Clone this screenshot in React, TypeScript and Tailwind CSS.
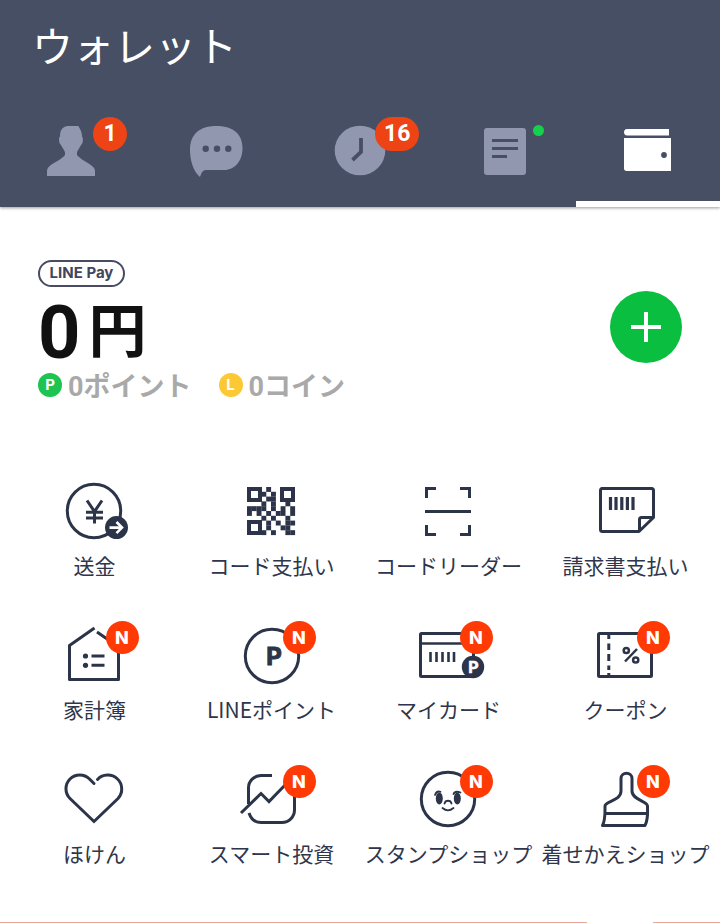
import React from 'react'
import clsx from 'clsx'

const NAVY = '#2b3448'
const TAB = '#9297b0'
const HEADER = '#474f65'

/* header tab icons */
function PersonIcon() {
  return (
    <svg viewBox="0 0 64 64" className="size-16" fill={TAB} aria-hidden="true">
      <path d="M27 7H38.300L39.500 9C41 11.500 42 14 42 17.500C43.200 18.500 43 21 42.500 24C40.500 26.500 39 29.500 37 33V36C40 40 47 43 51.700 46.700C54 48.500 55 50 55 52V57H7V52C7 50 8 48.500 10 46.700C15 43 22 40 25 36V33C23 29.500 21.500 26.500 19.500 24C18.700 20 19 18 20 17.500C20 11 22.500 8 27 7Z" />
    </svg>
  )
}

function ChatIcon() {
  return (
    <svg viewBox="0 0 64 64" className="size-16" fill={TAB} aria-hidden="true">
      <path d="M32 7C48 7 58.500 14 58.500 29C58.500 44 49 51 40 51H22C18.500 51 17.500 54 16 58C9 52 6 41 6 31C6 15 16 7 32 7Z" />
      <g fill={HEADER}>
        <circle cx="21.700" cy="29.700" r="3.200" />
        <circle cx="33" cy="29.700" r="3.200" />
        <circle cx="44.300" cy="29.700" r="3.200" />
      </g>
    </svg>
  )
}

function ClockIcon() {
  return (
    <svg viewBox="0 0 64 64" className="size-16" aria-hidden="true">
      <ellipse cx="32" cy="31.500" rx="25.300" ry="24.800" fill={TAB} />
      <path d="M33 19V33L24.500 41" fill="none" stroke={HEADER} strokeWidth="3.800" />
    </svg>
  )
}

function NewsIcon() {
  return (
    <svg viewBox="0 0 64 64" className="size-16" aria-hidden="true">
      <rect x="12" y="9" width="42" height="47" rx="3" fill={TAB} />
      <path d="M20 21.500H46M20 29.500H46M20 37.500H35" stroke={HEADER} strokeWidth="3" />
    </svg>
  )
}

function WalletIcon() {
  return (
    <svg viewBox="0 0 64 64" className="size-16" fill="#fff" aria-hidden="true">
      <path d="M11 10H53V16.500H11C7 16.500 7 10 11 10Z" />
      <path d="M8 19H55V52H10.500C9 52 8 51 8 49.500Z" />
      <circle cx="48" cy="36" r="2.900" fill={HEADER} />
    </svg>
  )
}

/* service icons, all on the same 80 x 72 canvas */
function Glyph({ children }: { children: React.ReactNode }) {
  return (
    <svg viewBox="1 0 80 72" className="h-[72px] w-20" fill="none" stroke={NAVY} strokeWidth="3" aria-hidden="true">
      {children}
    </svg>
  )
}

function SendIcon() {
  return (
    <Glyph>
      <circle cx="40" cy="36" r="26.700" />
      <path d="M33 25.500L40.500 36.500L48 25.500M40.500 36.500V48.500M32 37.300H49M32 43H49" strokeWidth="3" />
      <circle cx="62.500" cy="52.600" r="11.500" fill={NAVY} stroke="none" />
      <path d="M55.500 52.600H67.500M62.500 47L68 52.600L62.500 58.200" stroke="#fff" strokeWidth="2.600" />
    </Glyph>
  )
}

const QR = [
  '....#.....',
  '...#.#....',
  '....##....',
  '...#.#..#.',
  '####.#.#.#',
  '#.#.#.##.#',
  '...#.#..#.',
  '....#.#.##',
  '....#..##.',
  '...#.#..##',
]

function QrIcon() {
  return (
    <Glyph>
      <g fill={NAVY} stroke="none">
        {QR.map((row, y) =>
          row.split('').map((c, x) =>
            c === '#' ? <rect key={`${x}-${y}`} x={16 + x * 4.8} y={12 + y * 4.8} width="4.900" height="4.900" /> : null
          )
        )}
      </g>
      <g strokeWidth="4">
        <rect x="18" y="14" width="11" height="11" />
        <rect x="51" y="14" width="11" height="11" />
        <rect x="18" y="47" width="11" height="11" />
      </g>
    </Glyph>
  )
}

function ReaderIcon() {
  return (
    <Glyph>
      <path d="M28 13.500H18.500V23M52 13.500H61.500V23M18.500 50V59.500H28M61.500 50V59.500H52M17 36.500H63" />
    </Glyph>
  )
}

function BillIcon() {
  return (
    <Glyph>
      <path d="M16.500 13.500H66.500Q68.500 13.500 68.500 15.500V42.500L54 56.500H17.500Q15.500 56.500 15.500 54.500V15.500Q15.500 13.500 17.500 13.500Z" strokeLinejoin="round" />
      <path d="M54.500 56V44.500Q54.500 42.500 56.500 42.500H68" />
      <path d="M25.500 22V35M31 22V35M36.800 22V35M42.400 22V35M48 22V35" strokeWidth="3.200" />
    </Glyph>
  )
}

function HouseIcon() {
  return (
    <Glyph>
      <path d="M40.500 9L15.500 26.500V60.500H64.500V30M43 13L64 27.500" strokeLinejoin="round" />
      <path d="M37.500 37H50.500M37.500 46.300H50.500" />
      <g fill={NAVY} stroke="none">
        <circle cx="31.500" cy="37" r="2.600" />
        <circle cx="31.500" cy="46.300" r="2.600" />
      </g>
    </Glyph>
  )
}

function PointIcon() {
  return (
    <Glyph>
      <circle cx="41" cy="37" r="26.700" />
      <text x="43" y="46" textAnchor="middle" fill={NAVY} strokeWidth="1" className="font-['Inter',sans-serif] text-2xl font-bold">
        P
      </text>
    </Glyph>
  )
}

function CardIcon() {
  return (
    <Glyph>
      <rect x="12.500" y="14.500" width="53" height="43" rx="1" />
      <path d="M12.500 24.500H65" strokeWidth="2.600" />
      <path d="M22.500 33V43M28.500 33V43M34.500 33V43M40.500 33V43M46 33V43" strokeWidth="2.600" />
      <circle cx="65" cy="48" r="11.200" fill={NAVY} stroke="none" />
      <text x="65.500" y="54" textAnchor="middle" fill="#fff" stroke="#fff" strokeWidth="0.600" className="font-['Inter',sans-serif] text-base font-bold">
        P
      </text>
    </Glyph>
  )
}

function CouponIcon() {
  return (
    <Glyph>
      <rect x="13.500" y="14.500" width="53" height="43" rx="1" />
      <path d="M23.800 14V20M23.800 24.500V31M23.800 35V42M23.800 46.500V51M23.800 54V58" />
      <g strokeWidth="2.500">
        <circle cx="41.300" cy="31.500" r="2.600" />
        <circle cx="50.700" cy="41" r="2.600" />
        <path d="M52 30L40 42.500" />
      </g>
    </Glyph>
  )
}

function HeartIcon() {
  return (
    <Glyph>
      <path d="M40 20.500L35.500 16A13.700 13.700 0 0 0 16 35.500L40 58.500L64 35.500A13.700 13.700 0 0 0 43.500 16.500" strokeLinecap="round" />
    </Glyph>
  )
}

function InvestIcon() {
  return (
    <Glyph>
      <path d="M41 12.500H30A12.500 12.500 0 0 0 17.500 25V41M18 50C20 56 24 59.500 30 59.500H51A12.500 12.500 0 0 0 63.500 47V32" />
      <path d="M10 50L30 30.500L38 38.500L56 20" />
    </Glyph>
  )
}

function StampIcon() {
  return (
    <Glyph>
      <circle cx="40" cy="36" r="26.700" />
      <g fill={NAVY} stroke="none">
        <ellipse cx="31.300" cy="35.500" rx="3.500" ry="6" />
        <ellipse cx="49.300" cy="35.500" rx="3.500" ry="6" />
      </g>
      <g strokeWidth="1.800" strokeLinecap="round">
        <path d="M27 32Q28.500 27.500 32.500 28.800M45.500 31Q47 27.500 52.500 29.500" />
        <path d="M36.500 40.500A3.600 3.600 0 0 1 43.500 40.500M34.500 45Q40 49.800 45.500 45" />
      </g>
    </Glyph>
  )
}

function BrushIcon() {
  return (
    <Glyph>
      <path d="M36 15.500C36 8.500 47 8.500 47 15.500V28C47 37 62.500 38 62.500 43C62.500 50 63.500 56 60 62.500H17.500C20.500 57 20 50 20 43C20 38 36 38 36 28Z" strokeLinejoin="round" />
      <path d="M20 50.500H62.500" />
    </Glyph>
  )
}

const tabs = [
  { name: '友だち', icon: <PersonIcon />, badge: '1', badgePos: 'left-[53px]' },
  { name: 'トーク', icon: <ChatIcon /> },
  { name: 'タイムライン', icon: <ClockIcon />, badge: '16', badgePos: 'left-[47px]' },
  { name: 'ニュース', icon: <NewsIcon />, dot: true },
  { name: 'ウォレット', icon: <WalletIcon />, active: true },
]

const services = [
  { label: '送金', icon: <SendIcon /> },
  { label: 'コード支払い', icon: <QrIcon /> },
  { label: 'コードリーダー', icon: <ReaderIcon /> },
  { label: '請求書支払い', icon: <BillIcon /> },
  { label: '家計簿', icon: <HouseIcon />, isNew: true },
  { label: 'LINEポイント', icon: <PointIcon />, isNew: true },
  { label: 'マイカード', icon: <CardIcon />, isNew: true },
  { label: 'クーポン', icon: <CouponIcon />, isNew: true },
  { label: 'ほけん', icon: <HeartIcon /> },
  { label: 'スマート投資', icon: <InvestIcon />, isNew: true },
  { label: 'スタンプショップ', icon: <StampIcon />, isNew: true },
  { label: '着せかえショップ', icon: <BrushIcon />, isNew: true },
]

function Header() {
  return (
    <header className="bg-[#474f65] shadow-[0_1px_3px_rgba(0,0,0,0.4)]">
      <h1 className="px-8 pt-3.5 text-[41px] leading-[60px] text-white">ウォレット</h1>
      <nav className="mt-[18px] grid grid-cols-5">
        {tabs.map((tab) => (
          <a
            key={tab.name}
            href="#"
            aria-label={tab.name}
            className={clsx(
              'flex justify-center border-b-6 pt-[27px] pb-[18px]',
              tab.active ? 'border-white' : 'border-transparent'
            )}
          >
            <span className="relative">
              {tab.icon}
              {tab.badge && (
                <span
                  className={clsx(
                    "absolute -top-0.5 flex h-[34px] min-w-[34px] items-center justify-center rounded-full bg-[#ee4314] px-[9px] font-['Roboto',sans-serif] text-[23px] font-bold text-white",
                    tab.badgePos
                  )}
                >
                  {tab.badge}
                </span>
              )}
              {tab.dot && <span className="absolute top-1.5 left-[61px] size-[11px] rounded-full bg-[#14d14c]"></span>}
            </span>
          </a>
        ))}
      </nav>
    </header>
  )
}

function Coin({ letter, color }: { letter: string; color: string }) {
  return (
    <span className={clsx("flex size-6 items-center justify-center rounded-full font-['Inter',sans-serif] text-[15px] font-bold text-white", color)}>
      {letter}
    </span>
  )
}

function Balance() {
  return (
    <section className="flex items-start justify-between px-[38px] pt-[53px]">
      <div>
        <div className="flex h-[27px] w-[87px] items-center justify-center rounded-full border-2 border-[#474c63] font-['Inter',sans-serif] text-[15px] font-bold text-[#40465c]">
          LINE Pay
        </div>
        <p className="flex h-20 items-center gap-2 pt-3 font-bold text-[#111]">
          <span className="font-['Roboto',sans-serif] text-[74px] leading-none">0</span>
          <span className="pb-3 text-[58px] leading-none">円</span>
        </p>
        <div className="flex h-9 items-center gap-[27px] font-['Roboto','Noto_Sans_CJK_JP',sans-serif] text-[27px] font-bold text-[#a9a9a9]">
          <p className="flex items-center gap-1.5">
            <Coin letter="P" color="bg-[#1ec450]" />
            <span className="pt-1 leading-8">0ポイント</span>
          </p>
          <p className="flex items-center gap-1.5">
            <Coin letter="L" color="bg-[#fcc934]" />
            <span className="pt-1 leading-8">0コイン</span>
          </p>
        </div>
      </div>
      <button type="button" aria-label="チャージ" className="mt-[31px] flex size-[72px] items-center justify-center rounded-full bg-[#0abf3f]">
        <svg viewBox="0 0 30 30" className="size-[30px]" stroke="#fff" strokeWidth="4" aria-hidden="true">
          <path d="M15 0V30M0 15H30" />
        </svg>
      </button>
    </section>
  )
}

export default function App() {
  return (
    <div className="flex min-h-screen flex-col bg-white font-['Noto_Sans_CJK_JP',sans-serif]">
      <Header />
      <main className="flex-1">
        <Balance />
        <section className="mt-[72px] grid grid-cols-4 gap-y-9 px-1.5 pb-8">
          {services.map((s) => (
            <a key={s.label} href="#" className="flex flex-col items-center">
              <span className="relative">
                {s.icon}
                {s.isNew && (
                  <span className="absolute top-0.5 -right-1 flex size-[33px] items-center justify-center rounded-full bg-[#ff3a05] font-['Inter',sans-serif] text-lg font-extrabold text-white">
                    N
                  </span>
                )}
              </span>
              <span className="text-[21px] leading-9 whitespace-nowrap text-[#2f364b]">{s.label}</span>
            </a>
          ))}
        </section>
      </main>
      {/* top edge of the banner below */}
      <div className="flex h-px">
        <span className="w-[587px] bg-[#eba596]"></span>
        <span className="w-[66px] bg-white"></span>
        <span className="flex-1 bg-[#eba596]"></span>
      </div>
    </div>
  )
}
